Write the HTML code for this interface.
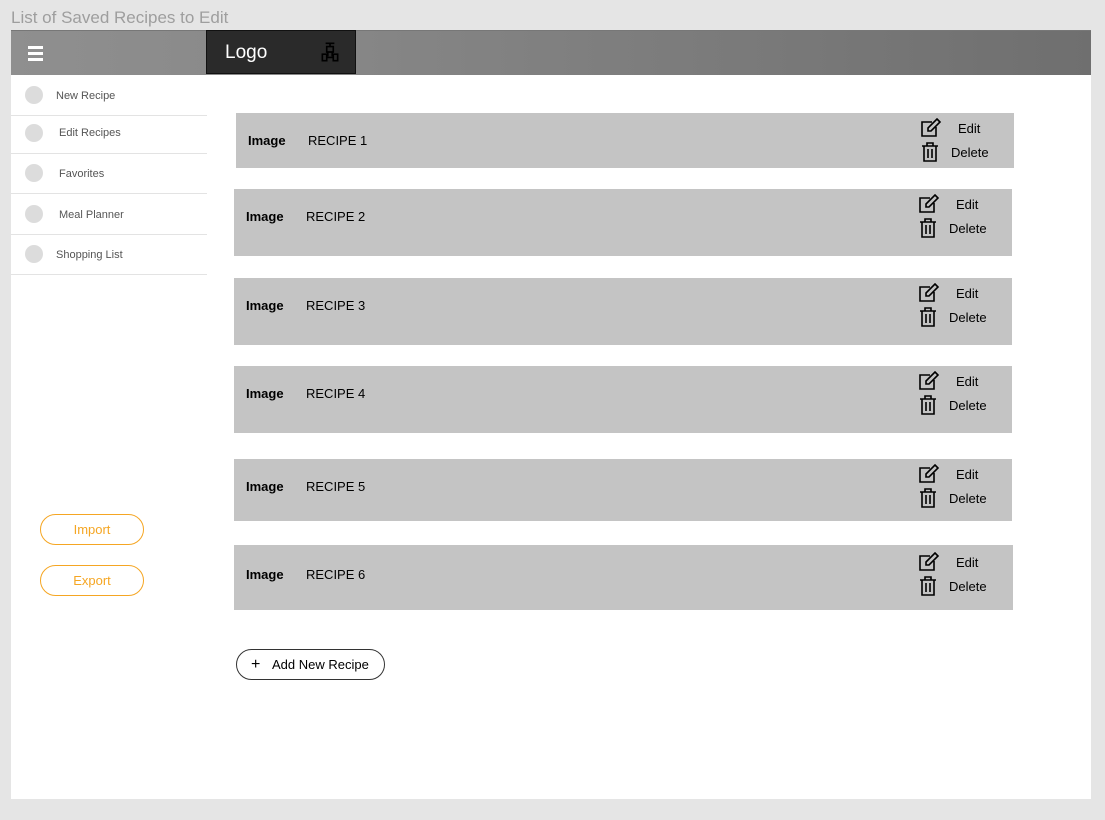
<!DOCTYPE html>
<html><head><style>
*{margin:0;padding:0;box-sizing:border-box}
body{width:1105px;height:820px;background:#e5e5e5;font-family:"Liberation Sans",Arial,sans-serif;position:relative;overflow:hidden}
.t{position:absolute;left:11px;top:8px;font-size:17px;color:#9e9e9e}
.main{position:absolute;left:11px;top:30px;width:1080px;height:769px;background:#fff}
.hdr{position:absolute;left:11px;top:30px;width:1080px;height:45px;background:linear-gradient(90deg,#8f8f8f,#8a8a8a 20%,#6f6f6f);border-top:1px solid #777}
.logo{position:absolute;left:206px;top:30px;width:150px;height:44px;background:#2a2a2a;border:1px solid #111}
.logo span{position:absolute;left:18px;top:11px;color:#fff;font-size:19px}
.nav{position:absolute;left:11px;width:196px;height:40px;border-bottom:1px solid #e3e3e3;font-size:11px;color:#555}
.nav i{position:absolute;left:14px;top:10px;width:18px;height:18px;border-radius:50%;background:#dcdcdc}
.nav span{position:absolute;top:14px}
.btn{position:absolute;left:40px;width:104px;height:31px;border:1px solid #f5a623;border-radius:16px;color:#f5a623;font-size:13px;text-align:center;line-height:29px}
.row{position:absolute;background:#c4c4c4;font-size:13px;color:#000}
.row b{position:absolute;left:12px}
.row .n{position:absolute;left:72px}
.row .e,.row .d{position:absolute;left:684px;width:80px;height:20px}
.row svg{position:absolute;left:0;top:0}
.row .e span{position:absolute;left:38px;top:3px}
.row .d span{position:absolute;left:31px;top:3px}
.add{position:absolute;left:236px;top:649px;width:149px;height:31px;border:1px solid #333;border-radius:16px;font-size:13px;line-height:29px}
</style></head><body>
<div class="t">List of Saved Recipes to Edit</div>
<div class="main"></div>
<div class="hdr">
<div style="position:absolute;left:17px;top:15px;width:15px;height:3px;background:#fff"></div>
<div style="position:absolute;left:17px;top:21px;width:15px;height:3px;background:#fff"></div>
<div style="position:absolute;left:17px;top:27px;width:15px;height:3px;background:#fff"></div>
</div>
<div class="logo"><span>Logo</span>
<svg style="position:absolute;left:111px;top:9px" width="24" height="24" viewBox="0 0 22 22" fill="none" stroke="#000" stroke-width="1.5"><path d="M7 3h8M11 3v3M8 6h6v5H8zM9 11v4M13 11v4M4 13h4v6H4zM14 13h4v6h-4zM8 16h6"/></svg></div>
<div class="nav" style="top:76px"><i></i><span style="left:45px">New Recipe</span></div>
<div class="nav" style="top:116px;height:38px"><i style="top:8px"></i><span style="left:48px;top:11px">Edit Recipes</span></div>
<div class="nav" style="top:154px"><i></i><span style="left:48px">Favorites</span></div>
<div class="nav" style="top:195px"><i></i><span style="left:48px">Meal Planner</span></div>
<div class="nav" style="top:235px"><i></i><span style="left:45px">Shopping List</span></div>
<div class="btn" style="top:514px">Import</div>
<div class="btn" style="top:565px">Export</div>

<div class="row" style="left:236px;top:113px;width:778px;height:55px"><b style="top:20px">Image</b><span class="n" style="top:20px">RECIPE 1</span>
<div class="e" style="top:5px"><svg width="22" height="20" viewBox="0 0 22 20" fill="none" stroke="#000" stroke-width="1.6"><path d="M12 4H2v14h14V9"/><path d="M17 1l3 3-9 9H8v-3z"/></svg><span>Edit</span></div>
<div class="d" style="top:29px"><svg width="22" height="20" viewBox="0 0 22 20" fill="none" stroke="#000" stroke-width="1.6"><path d="M2 4h16M7 4V1h6v3M4 4v15h12V4M8 7v9M12 7v9"/></svg><span>Delete</span></div></div>

<div class="row" style="left:234px;top:189px;width:778px;height:67px"><b style="top:20px">Image</b><span class="n" style="top:20px">RECIPE 2</span>
<div class="e" style="top:5px"><svg width="22" height="20" viewBox="0 0 22 20" fill="none" stroke="#000" stroke-width="1.6"><path d="M12 4H2v14h14V9"/><path d="M17 1l3 3-9 9H8v-3z"/></svg><span>Edit</span></div>
<div class="d" style="top:29px"><svg width="22" height="20" viewBox="0 0 22 20" fill="none" stroke="#000" stroke-width="1.6"><path d="M2 4h16M7 4V1h6v3M4 4v15h12V4M8 7v9M12 7v9"/></svg><span>Delete</span></div></div>

<div class="row" style="left:234px;top:278px;width:778px;height:67px"><b style="top:20px">Image</b><span class="n" style="top:20px">RECIPE 3</span>
<div class="e" style="top:5px"><svg width="22" height="20" viewBox="0 0 22 20" fill="none" stroke="#000" stroke-width="1.6"><path d="M12 4H2v14h14V9"/><path d="M17 1l3 3-9 9H8v-3z"/></svg><span>Edit</span></div>
<div class="d" style="top:29px"><svg width="22" height="20" viewBox="0 0 22 20" fill="none" stroke="#000" stroke-width="1.6"><path d="M2 4h16M7 4V1h6v3M4 4v15h12V4M8 7v9M12 7v9"/></svg><span>Delete</span></div></div>

<div class="row" style="left:234px;top:366px;width:778px;height:67px"><b style="top:20px">Image</b><span class="n" style="top:20px">RECIPE 4</span>
<div class="e" style="top:5px"><svg width="22" height="20" viewBox="0 0 22 20" fill="none" stroke="#000" stroke-width="1.6"><path d="M12 4H2v14h14V9"/><path d="M17 1l3 3-9 9H8v-3z"/></svg><span>Edit</span></div>
<div class="d" style="top:29px"><svg width="22" height="20" viewBox="0 0 22 20" fill="none" stroke="#000" stroke-width="1.6"><path d="M2 4h16M7 4V1h6v3M4 4v15h12V4M8 7v9M12 7v9"/></svg><span>Delete</span></div></div>

<div class="row" style="left:234px;top:459px;width:778px;height:62px"><b style="top:20px">Image</b><span class="n" style="top:20px">RECIPE 5</span>
<div class="e" style="top:5px"><svg width="22" height="20" viewBox="0 0 22 20" fill="none" stroke="#000" stroke-width="1.6"><path d="M12 4H2v14h14V9"/><path d="M17 1l3 3-9 9H8v-3z"/></svg><span>Edit</span></div>
<div class="d" style="top:29px"><svg width="22" height="20" viewBox="0 0 22 20" fill="none" stroke="#000" stroke-width="1.6"><path d="M2 4h16M7 4V1h6v3M4 4v15h12V4M8 7v9M12 7v9"/></svg><span>Delete</span></div></div>

<div class="row" style="left:234px;top:545px;width:779px;height:65px"><b style="top:22px">Image</b><span class="n" style="top:22px">RECIPE 6</span>
<div class="e" style="top:7px"><svg width="22" height="20" viewBox="0 0 22 20" fill="none" stroke="#000" stroke-width="1.6"><path d="M12 4H2v14h14V9"/><path d="M17 1l3 3-9 9H8v-3z"/></svg><span>Edit</span></div>
<div class="d" style="top:31px"><svg width="22" height="20" viewBox="0 0 22 20" fill="none" stroke="#000" stroke-width="1.6"><path d="M2 4h16M7 4V1h6v3M4 4v15h12V4M8 7v9M12 7v9"/></svg><span>Delete</span></div></div>

<div class="add"><span style="position:absolute;left:14px;font-size:16px">+</span><span style="position:absolute;left:35px">Add New Recipe</span></div>
</body></html>
